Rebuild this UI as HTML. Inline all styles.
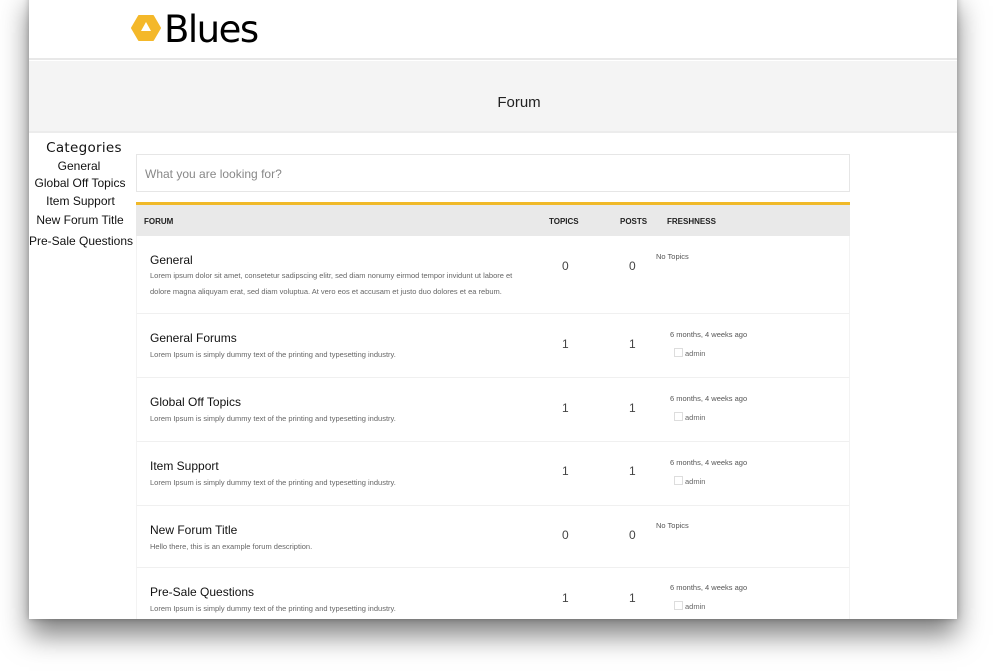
<!DOCTYPE html>
<html><head><meta charset="utf-8"><style>
*{margin:0;padding:0;box-sizing:border-box}
body{width:993px;height:671px;background:#fff;position:relative;overflow:hidden;font-family:"Liberation Sans",sans-serif}
.page{position:absolute;left:29px;top:-10px;width:928px;height:629px;background:#fff;box-shadow:0 16px 26px rgba(0,0,0,.5),0 0 6px rgba(0,0,0,.25);overflow:hidden}
.in{position:absolute;left:-29px;top:10px;width:993px;height:620px}
.hdr{position:absolute;left:0;top:0;width:993px;height:60px;border-bottom:2px solid #e8e8e8}
.blues{position:absolute;left:164px;top:8px;font-size:37px;color:#000;font-family:"DejaVu Sans","Liberation Sans",sans-serif;letter-spacing:-1.5px}
.band{position:absolute;left:29px;top:61px;width:928px;height:72px;background:#f4f4f4;border-bottom:2px solid #ececec}
.band div{position:absolute;left:0;width:100%;top:33px;text-align:center;font-size:15px;color:#222;padding-left:52px}
.cats{position:absolute;top:141px;left:29px;width:110px;font-size:12px;color:#111;text-align:center}
.cats div{line-height:15px}
.search{position:absolute;left:136px;top:154px;width:714px;height:38px;border:1px solid #e6e6e6;font-size:12px;color:#888;padding:12px 8px}
.tbl{position:absolute;left:136px;top:202px;width:714px;border-top:3px solid #f0b929}
.th{height:31px;background:#e9e9e9;font-size:8px;font-weight:bold;color:#222;position:relative}
.th span{position:absolute;top:12px}
.row{position:relative;border-bottom:1px solid #f0f0f0;border-left:1px solid #f3f3f3;border-right:1px solid #f3f3f3}
.t{position:absolute;left:13px;font-size:12px;color:#111}
.d{position:absolute;left:13px;font-size:7.5px;color:#666;line-height:16px}
.n{position:absolute;font-size:12px;color:#444}
.f{position:absolute;font-size:7.5px;color:#555}
.ad{position:absolute;font-size:7.5px;color:#666}
.ad:before{content:"";display:inline-block;width:7px;height:7px;border:1px solid #ddd;margin-right:2px;vertical-align:-1px}
</style></head><body>
<div class="page"><div class="in">
<div class="hdr">
<svg style="position:absolute;left:131px;top:15px" width="30" height="26" viewBox="0 0 30 26"><path d="M8 1H22L29 13L22 25H8L1 13Z" fill="#f4b82a" stroke="#f4b82a" stroke-linejoin="round" stroke-width="2"/><path d="M15 7L20 16H10Z" fill="#fff"/></svg>
<div class="blues">Blues</div>
</div>
<div class="band"><div>Forum</div></div>
<div class="cats">
<div style="font-size:13.5px;font-family:'DejaVu Sans',sans-serif;letter-spacing:.3px">Categories</div>
<div style="margin-top:3px;margin-left:-10px">General</div>
<div style="margin-top:2px;margin-left:-8px">Global Off Topics</div>
<div style="margin-top:3px;margin-left:-7px">Item Support</div>
<div style="margin-top:4px;margin-left:-8px">New Forum Title</div>
<div style="margin-top:6px;margin-left:-6px">Pre-Sale Questions</div>
</div>
<div class="search">What you are looking for?</div>
<div class="tbl">
<div class="th"><span style="left:8px">FORUM</span><span style="left:413px">TOPICS</span><span style="left:484px">POSTS</span><span style="left:531px">FRESHNESS</span></div>
<div class="row" style="height:78px"><div class="t" style="top:17px">General</div><div class="d" style="top:32px">Lorem ipsum dolor sit amet, consetetur sadipscing elitr, sed diam nonumy eirmod tempor invidunt ut labore et<br>dolore magna aliquyam erat, sed diam voluptua. At vero eos et accusam et justo duo dolores et ea rebum.</div><div class="n" style="left:425px;top:23px">0</div><div class="n" style="left:492px;top:23px">0</div><div class="f" style="left:519px;top:16px">No Topics</div></div>
<div class="row" style="height:64px"><div class="t" style="top:17px">General Forums</div><div class="d" style="top:33px">Lorem Ipsum is simply dummy text of the printing and typesetting industry.</div><div class="n" style="left:425px;top:23px">1</div><div class="n" style="left:492px;top:23px">1</div><div class="f" style="left:533px;top:16px">6 months, 4 weeks ago</div><div class="ad" style="left:537px;top:34px">admin</div></div>
<div class="row" style="height:64px"><div class="t" style="top:17px">Global Off Topics</div><div class="d" style="top:33px">Lorem Ipsum is simply dummy text of the printing and typesetting industry.</div><div class="n" style="left:425px;top:23px">1</div><div class="n" style="left:492px;top:23px">1</div><div class="f" style="left:533px;top:16px">6 months, 4 weeks ago</div><div class="ad" style="left:537px;top:34px">admin</div></div>
<div class="row" style="height:64px"><div class="t" style="top:17px">Item Support</div><div class="d" style="top:33px">Lorem Ipsum is simply dummy text of the printing and typesetting industry.</div><div class="n" style="left:425px;top:22px">1</div><div class="n" style="left:492px;top:22px">1</div><div class="f" style="left:533px;top:16px">6 months, 4 weeks ago</div><div class="ad" style="left:537px;top:34px">admin</div></div>
<div class="row" style="height:62px"><div class="t" style="top:17px">New Forum Title</div><div class="d" style="top:33px">Hello there, this is an example forum description.</div><div class="n" style="left:425px;top:22px">0</div><div class="n" style="left:492px;top:22px">0</div><div class="f" style="left:519px;top:15px">No Topics</div></div>
<div class="row" style="height:64px"><div class="t" style="top:17px">Pre-Sale Questions</div><div class="d" style="top:33px">Lorem Ipsum is simply dummy text of the printing and typesetting industry.</div><div class="n" style="left:425px;top:23px">1</div><div class="n" style="left:492px;top:23px">1</div><div class="f" style="left:533px;top:15px">6 months, 4 weeks ago</div><div class="ad" style="left:537px;top:33px">admin</div></div>
</div>
</div></div>
</body></html>
